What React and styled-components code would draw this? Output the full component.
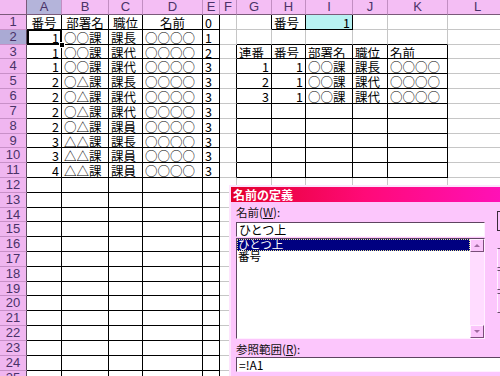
import React from 'react';
import styled, { createGlobalStyle, css } from 'styled-components';

const GlobalStyle = createGlobalStyle`
  html, body { margin: 0; padding: 0; background: #fff; overflow: hidden; }
  body { width: 500px; height: 376px; }
`;

const COLS = ['A', 'B', 'C', 'D', 'E', 'F', 'G', 'H', 'I', 'J', 'K', 'L'];
const ROW_COUNT = 25;

const Page = styled.div`
  position: relative;
  width: 500px;
  height: 376px;
  overflow: hidden;
  font-family: "Noto Sans CJK JP", "Liberation Sans", sans-serif;
`;

const Sheet = styled.div`
  display: grid;
  grid-template-columns: 27px 35px 47px 34px 60px 17px 17px 35px 34px 47px 35px 60px 60px;
  grid-template-rows: 15px repeat(${ROW_COUNT}, 14.82px);
`;

const HeadBase = css`
  box-sizing: border-box;
  color: #4a3268;
  font: 13px/14px "Liberation Sans", sans-serif;
  text-align: center;
  overflow: hidden;
`;

const Corner = styled.div`
  ${HeadBase};
  background: #f2baf2;
  border-right: 1px solid #7a5a7a;
  border-bottom: 1px solid #7a5a7a;
`;

const ColHead = styled.div`
  ${HeadBase};
  background: ${p => (p.$sel ? '#b4b4da' : '#f4bef4')};
  border-right: 1px solid #c28ec2;
  border-bottom: 1px solid #7a5a7a;
`;

const RowHead = styled.div`
  ${HeadBase};
  background: ${p => (p.$sel ? '#aaaad4' : '#f0b6f0')};
  border-right: 1px solid #5e4a5e;
  border-bottom: 1px solid #c890c8;
`;

const Cell = styled.div`
  box-sizing: border-box;
  position: relative;
  border-right: 1px solid ${p => (p.$rb ? '#000' : '#c6c6c6')};
  border-bottom: 1px solid ${p => (p.$bb ? '#000' : '#c6c6c6')};
  background: ${p => p.$fill || '#fff'};
  color: #000;
  font-size: 12.5px;
  line-height: 13px;
  text-align: ${p => p.$align || 'left'};
  padding: 1px 2px 0;
  white-space: nowrap;
  ${p =>
    p.$active &&
    css`
      z-index: 2;
      &::after {
        content: '';
        position: absolute;
        left: 0;
        top: -1px;
        right: -1px;
        bottom: -1px;
        border: 2px solid #000;
        pointer-events: none;
      }
      &::before {
        content: '';
        position: absolute;
        right: -4px;
        bottom: -4px;
        width: 4px;
        height: 4px;
        background: #000;
        border: 1px solid #fff;
        z-index: 3;
      }
    `}
`;

/* ---------- data ---------- */
const cells = {};
const put = (addr, v, a) => { cells[addr] = { v, a }; };
put('A1', '番号', 'center'); put('B1', '部署名', 'center'); put('C1', '職位', 'center'); put('D1', '名前', 'center'); put('E1', '0', 'left');
const mainRows = [
  [1, '○○課', '課長', '1'],
  [1, '○○課', '課代', '2'],
  [1, '○○課', '課代', '3'],
  [2, '○△課', '課長', '3'],
  [2, '○△課', '課代', '3'],
  [2, '○△課', '課代', '3'],
  [2, '○△課', '課員', '3'],
  [3, '△△課', '課長', '3'],
  [3, '△△課', '課員', '3'],
  [4, '△△課', '課員', '3'],
];
mainRows.forEach((r, i) => {
  const n = i + 2;
  put('A' + n, String(r[0]), 'right');
  put('B' + n, r[1]);
  put('C' + n, r[2]);
  put('D' + n, '○○○○');
  put('E' + n, r[3]);
});
put('H1', '番号'); put('I1', '1', 'right');
put('G3', '連番'); put('H3', '番号'); put('I3', '部署名'); put('J3', '職位'); put('K3', '名前');
[['1', '課長'], ['2', '課代'], ['3', '課代']].forEach((r, i) => {
  const n = i + 4;
  put('G' + n, r[0], 'right');
  put('H' + n, '1', 'right');
  put('I' + n, '○○課');
  put('J' + n, r[1]);
  put('K' + n, '○○○○');
});

const regions = [
  [1, 25, 0, 4],
  [3, 11, 6, 10],
  [1, 1, 7, 8],
];
const ruled = (r, c) => regions.some(([r1, r2, c1, c2]) => r >= r1 && r <= r2 && c >= c1 && c <= c2);

/* ---------- dialog ---------- */
const Dialog = styled.div`
  position: absolute;
  left: 229px;
  top: 185px;
  width: 300px;
  height: 200px;
  box-sizing: border-box;
  background: #fcc6fc;
  border-top: 2px solid #fde4fd;
  border-left: 2px solid #fde4fd;
  display: flex;
  flex-direction: column;
  z-index: 5;
`;

const TitleBar = styled.div`
  height: 15px;
  flex: none;
  background: linear-gradient(to right, #e4002c 0%, #ff0a78 45%, #ff12c4 100%);
  color: #fff;
  font-weight: bold;
  font-size: 12px;
  line-height: 15px;
  padding-left: 2px;
`;

const Body = styled.div`
  display: flex;
  flex-direction: column;
  padding: 2px 0 0 5px;
`;

const TopArea = styled.div`
  display: flex;
  align-items: flex-start;
  gap: 12px;
`;

const MainCol = styled.div`
  width: 249px;
  flex: none;
  display: flex;
  flex-direction: column;
`;

const Label = styled.div`
  height: 16px;
  line-height: 16px;
  font-size: 11.5px;
  color: #111;
  margin-top: ${p => p.$mt || 0}px;
  u { text-decoration: underline; }
`;

const TextBox = styled.div`
  height: 15px;
  box-sizing: border-box;
  background: #fff;
  border-top: 1px solid #5e4460;
  border-left: 1px solid #5e4460;
  border-right: 1px solid #fff0ff;
  border-bottom: 1px solid #fff0ff;
  font-size: 12px;
  line-height: 13px;
  padding-left: 2px;
  color: #000;
  margin-top: ${p => p.$mt || 0}px;
  width: ${p => p.$w || 'auto'};
  white-space: nowrap;
`;

const ListBox = styled.div`
  margin-top: 1px;
  height: 101px;
  box-sizing: border-box;
  background: #fff;
  border-top: 1px solid #5e4460;
  border-left: 1px solid #5e4460;
  border-right: 1px solid #fff0ff;
  border-bottom: 1px solid #fff0ff;
  display: flex;
`;

const Items = styled.div`
  flex: 1;
  display: flex;
  flex-direction: column;
`;

const Item = styled.div`
  height: 12px;
  line-height: 11px;
  font-size: 11.5px;
  padding-left: 1px;
  box-sizing: border-box;
  white-space: nowrap;
  ${p =>
    p.$sel
      ? css`
          background: #000080;
          color: #fff;
          outline: 1px dotted #e8e890;
          outline-offset: -1px;
        `
      : css`
          color: #000;
        `}
`;

const ScrollBar = styled.div`
  width: 14px;
  flex: none;
  display: flex;
  flex-direction: column;
  justify-content: space-between;
  background: #ffdcff;
`;

const ScrollBtn = styled.div`
  height: 13px;
  box-sizing: border-box;
  background: #fbc4fb;
  border-top: 1px solid #fff0ff;
  border-left: 1px solid #fff0ff;
  border-right: 1px solid #7a4e7a;
  border-bottom: 1px solid #7a4e7a;
  display: flex;
  align-items: center;
  justify-content: center;
`;

const Arrow = styled.span`
  width: 0;
  height: 0;
  border-left: 3px solid transparent;
  border-right: 3px solid transparent;
  ${p =>
    p.$up
      ? css`border-bottom: 3px solid #a06aa0;`
      : css`border-top: 3px solid #a06aa0;`}
`;

const ButtonCol = styled.div`
  display: flex;
  flex-direction: column;
`;

const DlgButton = styled.div`
  width: 76px;
  height: 20px;
  box-sizing: border-box;
  margin-top: ${p => p.$mt}px;
  background: #fbc4fb;
  ${p =>
    p.$default
      ? css`
          border: 1px solid #3a2a3a;
        `
      : css`
          border-top: 1px solid #6a4a6a;
          border-left: 1px solid #fff0ff;
          border-right: 1px solid #6a4a6a;
          border-bottom: 1px solid #6a4a6a;
        `}
`;

export default function App() {
  const grid = [];
  grid.push(<Corner key="corner" />);
  COLS.forEach(c => grid.push(<ColHead key={'h' + c} $sel={c === 'A'}>{c}</ColHead>));
  for (let r = 1; r <= ROW_COUNT; r++) {
    grid.push(<RowHead key={'r' + r} $sel={r === 2}>{r}</RowHead>);
    COLS.forEach((c, ci) => {
      const addr = c + r;
      const d = cells[addr];
      const rb = ruled(r, ci) || ruled(r, ci + 1);
      const bb = ruled(r, ci) || ruled(r + 1, ci);
      grid.push(
        <Cell
          key={addr}
          $rb={rb}
          $bb={bb}
          $align={d && d.a}
          $fill={addr === 'I1' ? '#b8f2f2' : undefined}
          $active={addr === 'A2'}
        >
          {d ? d.v : ''}
        </Cell>
      );
    });
  }

  return (
    <Page>
      <GlobalStyle />
      <Sheet>{grid}</Sheet>
      <Dialog>
        <TitleBar>名前の定義</TitleBar>
        <Body>
          <TopArea>
            <MainCol>
              <Label>名前(<u>W</u>):</Label>
              <TextBox $mt={2}>ひとつ上</TextBox>
              <ListBox>
                <Items>
                  <Item $sel>ひとつ上</Item>
                  <Item>番号</Item>
                </Items>
                <ScrollBar>
                  <ScrollBtn><Arrow $up /></ScrollBtn>
                  <ScrollBtn><Arrow /></ScrollBtn>
                </ScrollBar>
              </ListBox>
            </MainCol>
            <ButtonCol aria-hidden="true">
              <DlgButton $default $mt={7} />
              <DlgButton $mt={17} />
              <DlgButton $mt={2} />
              <DlgButton $mt={3} />
            </ButtonCol>
          </TopArea>
          <Label $mt={2}>参照範囲(<u>R</u>):</Label>
          <TextBox $w="300px">=!A1</TextBox>
        </Body>
      </Dialog>
    </Page>
  );
}
